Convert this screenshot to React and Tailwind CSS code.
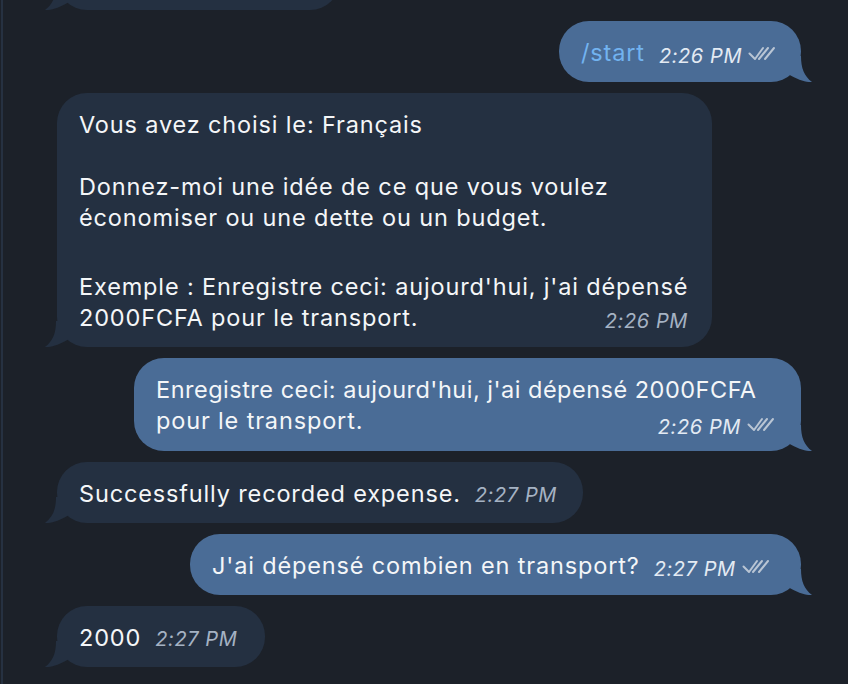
import React from 'react';

const font = { fontFamily: 'Inter, "Noto Sans", sans-serif' };

const Checks = () => (
  <svg viewBox="0 0 30 16" className="ml-[6px] h-[16px] w-[30px] shrink-0" fill="none" stroke="#b9c5d4" strokeWidth="2" strokeLinecap="round" strokeLinejoin="round">
    <path d="M1.5 7.5l5.5 5.5 8-11" />
    <path d="M11 13l9-11" />
    <path d="M17 13l9-11" />
  </svg>
);

const Tail = ({ out }) => (
  <svg
    viewBox="0 0 26 26"
    className={
      out
        ? 'absolute bottom-0 right-[-11px] h-[26px] w-[26px]'
        : 'absolute bottom-0 left-[-12px] h-[26px] w-[26px] -scale-x-100'
    }
  >
    <path d="M0 0H15C15 12 18 20 26 26C20 26.5 12 24 2 18L0 18Z" fill={out ? '#4a6c96' : '#243041'} />
  </svg>
);

const Time = ({ out, children }) => (
  <span className={`translate-y-[2px] text-[20px] leading-[20px] italic tracking-[0.6px] ${out ? 'text-[#e3eaf3]' : 'text-[#a5b2c3]'}`}>{children}</span>
);

const Bubble = ({ out, className = '', children }) => (
  <div
    className={`relative whitespace-nowrap rounded-[30px] pl-[22px] pr-[24px] pt-[16px] pb-[14px] text-[23.5px] leading-[31px] tracking-[0.85px] text-[#f4f6f8] ${
      out ? 'self-end bg-[#4a6c96]' : 'self-start bg-[#243041]'
    } ${className}`}
  >
    {children}
    <Tail out={out} />
  </div>
);

export default function App() {
  return (
    <div className="flex h-[684px] w-full overflow-hidden bg-[#1c2129]" style={font}>
      <div className="w-[1px]" />
      <div className="w-[2px] bg-[#263141]" />
      <div className="flex flex-1 flex-col gap-[11px] pl-[54px] pr-[47px]">
        {/* partially scrolled message */}
        <Bubble className="-mt-[51px] w-[283px] h-[61px]" />

        <Bubble out className="w-[242px] h-[61px]">
          <div className="flex items-baseline">
            <span className="text-[#72b3f0]">/start</span>
            <span className="ml-[14px] flex items-center">
              <Time out>2:26 PM</Time>
              <Checks />
            </span>
          </div>
        </Bubble>

        <Bubble className="w-[655px] h-[254px]">
          <div>Vous avez choisi le: Français</div>
          <div className="mt-[31px]">Donnez-moi une idée de ce que vous voulez</div>
          <div>économiser ou une dette ou un budget.</div>
          <div className="mt-[38px]">Exemple : Enregistre ceci: aujourd'hui, j'ai dépensé</div>
          <div className="flex items-baseline justify-between">
            <span>2000FCFA pour le transport.</span>
            <Time>2:26 PM</Time>
          </div>
        </Bubble>

        <Bubble out className="w-[667px] h-[93px]">
          <div className="tracking-[0.5px]">Enregistre ceci: aujourd'hui, j'ai dépensé 2000FCFA</div>
          <div className="flex items-baseline justify-between">
            <span>pour le transport.</span>
            <span className="flex translate-y-[3px] items-center">
              <Time out>2:26 PM</Time>
              <Checks />
            </span>
          </div>
        </Bubble>

        <Bubble className="w-[526px] h-[61px]">
          <div className="flex items-baseline">
            <span>Successfully recorded expense.</span>
            <span className="ml-[14px]">
              <Time>2:27 PM</Time>
            </span>
          </div>
        </Bubble>

        <Bubble out className="w-[611px] h-[61px]">
          <div className="flex items-baseline">
            <span>J'ai dépensé combien en transport?</span>
            <span className="ml-[14px] flex items-center">
              <Time out>2:27 PM</Time>
              <Checks />
            </span>
          </div>
        </Bubble>

        <Bubble className="w-[208px] h-[61px]">
          <div className="flex items-baseline">
            <span>2000</span>
            <span className="ml-[14px]">
              <Time>2:27 PM</Time>
            </span>
          </div>
        </Bubble>
      </div>
    </div>
  );
}
